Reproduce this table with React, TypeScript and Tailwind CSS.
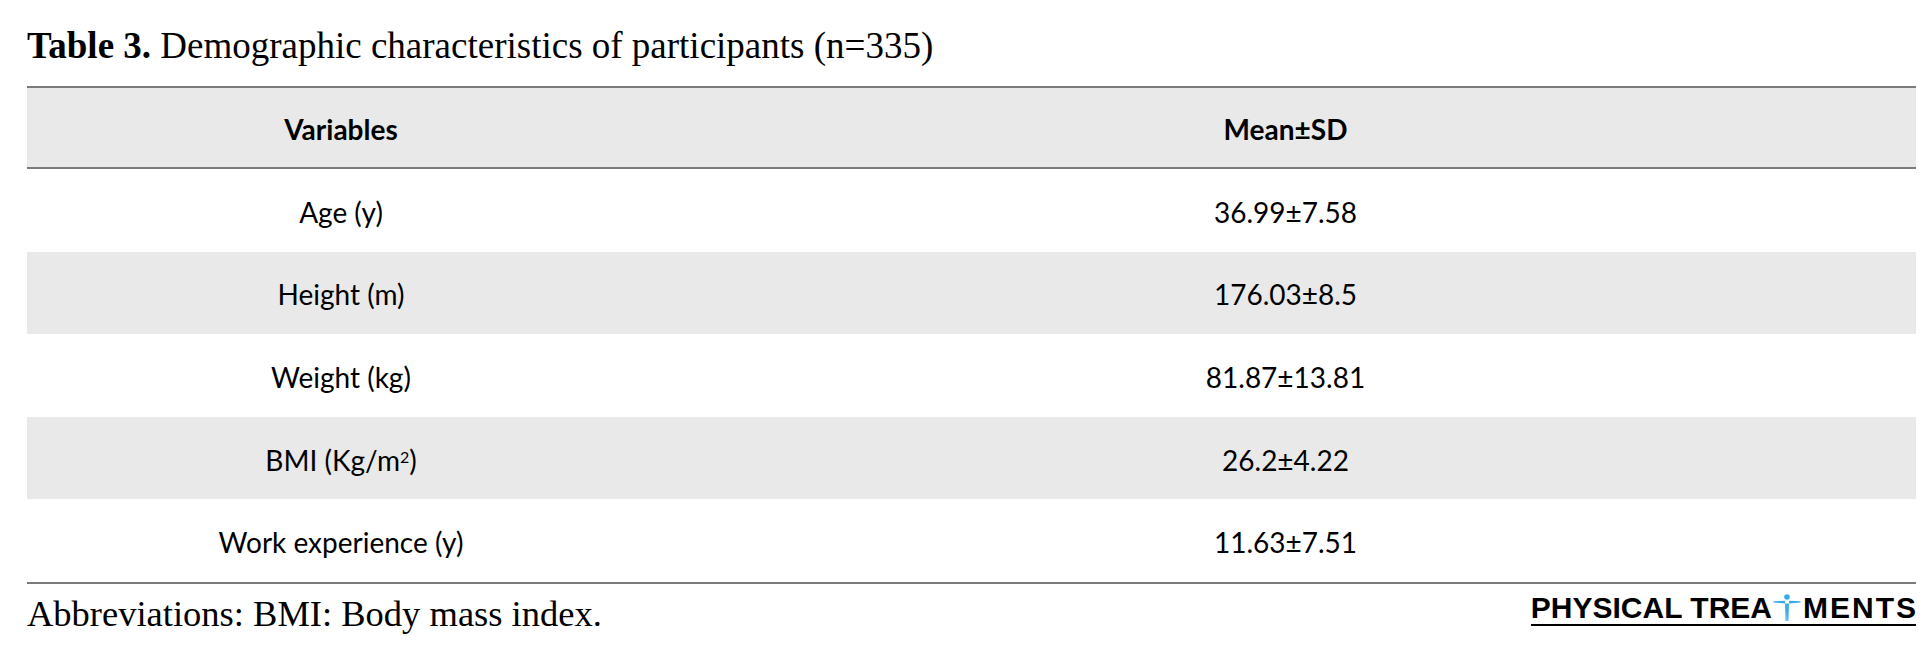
const rows = [
  { label: "Age (y)", value: "36.99±7.58" },
  { label: "Height (m)", value: "176.03±8.5" },
  { label: "Weight (kg)", value: "81.87±13.81" },
  { label: "BMI (Kg/m²)", value: "26.2±4.22", sup: true },
  { label: "Work experience (y)", value: "11.63±7.51" },
]

// little blue person that stands in for the T of "TREATMENTS"
function Figure() {
  return (
    <svg width="28" height="28" viewBox="0 0 28 28" className="ml-[1px] mr-[2px] -mb-[1px]">
      <circle cx="14" cy="3" r="2.8" fill="#35ade2" />
      <path d="M0.5 7.2 L12 6.8 L12.2 15 L12.6 27 L13.7 27 L14 17 L14.3 27 L15.4 27 L15.8 15 L16 6.8 L27.5 7.2 L27.5 8.4 L16.2 9.4 L11.8 9.4 L0.5 8.4 Z" fill="#35ade2" />
    </svg>
  )
}

export default function App() {
  return (
    <div className="w-[1932px] h-[668px] bg-white pl-[27px] pr-[16px] pt-[23px]">
      <h2 className="font-['Liberation_Serif',serif] text-[37px] leading-[46px] text-black">
        <span className="font-bold">Table 3.</span> Demographic characteristics of participants (n=335)
      </h2>

      <div className="mt-[17px] border-t-2 border-b-2 border-[#7b7b7b] font-['Lato',sans-serif] text-black">
        <div className="flex h-[81px] items-center bg-[#e9e9e9] border-b-2 border-[#7b7b7b] pt-[2px] text-[28px] font-bold">
          <div className="w-[628px] text-center">Variables</div>
          <div className="flex-1 text-center">Mean±SD</div>
        </div>
        {rows.map((r, i) => (
          <div
            key={r.label}
            className={`flex h-[82.6px] items-center pt-[3px] text-[28px] ${i % 2 === 1 ? "bg-[#e9e9e9]" : "bg-white"}`}
          >
            <div className="w-[628px] text-center">
              {r.sup ? (
                <>
                  BMI (Kg/m<sup className="text-[16px]">2</sup>)
                </>
              ) : (
                r.label
              )}
            </div>
            <div className="flex-1 text-center">{r.value}</div>
          </div>
        ))}
      </div>

      <div className="flex items-start justify-between pt-[8px]">
        <p className="font-['Liberation_Serif',serif] text-[36.5px] leading-[44px] text-black">
          Abbreviations: BMI: Body mass index.
        </p>
        <div className="mt-[2px] flex flex-col items-stretch">
          <div className="flex items-end font-['Liberation_Sans',sans-serif] text-[30px] font-bold leading-[26px] text-black">
            <span>PHYSICAL TREA</span>
            <Figure />
            <span className="tracking-[2px] -mr-[2px]">MENTS</span>
          </div>
          <div className="mt-[3px] h-[2px] bg-black" />
        </div>
      </div>
    </div>
  )
}
